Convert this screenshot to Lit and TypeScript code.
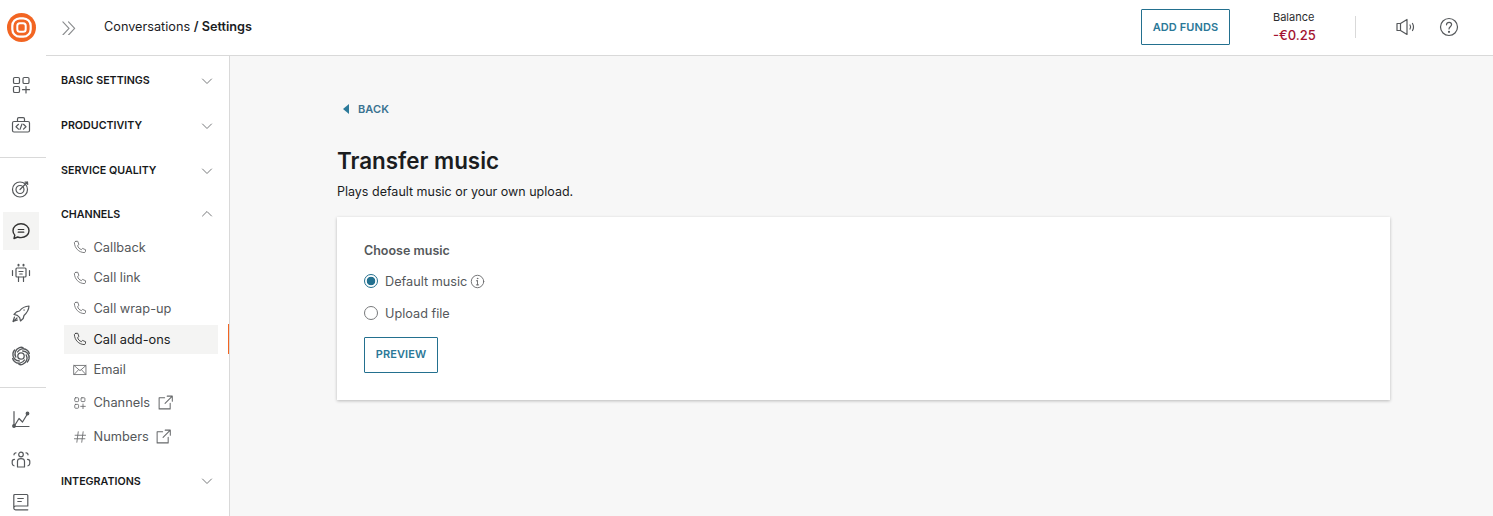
import { LitElement, html, css, svg } from "lit";
import { customElement } from "lit/decorators.js";

const ic = (body: unknown, size = 20, vb = 20, cls = "") =>
  html`<svg class="ic ${cls}" width=${size} height=${size} viewBox="0 0 ${vb} ${vb}" fill="none" stroke="currentColor" stroke-width="1.200" stroke-linecap="round" stroke-linejoin="round">${body}</svg>`;

const grid = svg`<rect x="2.500" y="2.500" width="5.500" height="5.500" rx="1.200"/><rect x="11.500" y="2.500" width="5.500" height="5.500" rx="1.200"/><rect x="2.500" y="12" width="5.500" height="5.500" rx="1.200"/><path d="M14.300 11.500v6.500M11 14.800h6.600"/>`;
const phone = svg`<path d="M4 2 6.800 1.800 8.500 6.500 6.500 8c.8 2.800 2.800 4.800 5.500 5.800l1.600-1.800 4.400 1.900-.3 2.800c-.2.800-1 1.400-1.800 1.300C8 17.500 2.500 11.500 2 4c0-1 .9-1.800 2-2z"/>`;
const ext = svg`<path d="M9 4.500H2.500V17.500H15.500V11M12 2.500H18V8.500M18 2.500 9.500 11"/>`;

const blades = [0, 60, 120, 180, 240, 300].map(
  (a) => svg`<path transform="rotate(${a} 10 10)" d="M6.500 6C8.500 2.800 13 1.500 16.500 4.500c1 .9 1.500 1.800 1.800 3" stroke-width="1.400"/>`
);

const rail = [
  svg`<rect x="2.500" y="2.500" width="6" height="6" rx="1.300"/><rect x="12" y="2.500" width="6" height="6" rx="1.300"/><rect x="2.500" y="11.500" width="6" height="6" rx="1.300"/><path d="M15 11.500v6.500M11.500 14.700h7"/>`,
  svg`<rect x="1.500" y="5.500" width="17" height="10.500" rx="1.500"/><path d="M6.500 5.500V3c0-.8.500-1.300 1.300-1.300h4.400c.8 0 1.300.5 1.300 1.300v2.500M7.500 8.300 5 10.700l2.500 2.400M12.500 8.300l2.500 2.400-2.500 2.400M11 8 9 13.400"/>`,
  svg`<circle cx="9" cy="10.500" r="7.500"/><circle cx="9" cy="10.500" r="4"/><path d="M9 10.500 16.500 3M14 3.200 16.500 3l.2 2.500"/>`,
  svg`<path d="M10 2.800c4.400 0 8 3 8 6.900s-3.600 6.900-8 6.900c-1.200 0-2.300-.2-3.300-.6L3 17.500l.8-3.400C2.700 12.900 2 11.400 2 9.700c0-3.900 3.600-6.900 8-6.900z" stroke-width="1.400"/><path d="M7.200 8.500h5.600M7.200 11.200h5.600"/>`,
  svg`<rect x="5" y="5" width="10" height="9" rx="1"/><path d="M1.500 7.500v5M18.500 7.500v5M7.500 14v4.500M12.500 14v4.500M8 8.500h4M8.800 11h2.400"/><path d="M7.500 1.800v.6M12.500 1.800v.6" stroke-width="2"/>`,
  svg`<path d="M18 2c-4 .2-7 1.800-9.500 5L5.500 7.800 3 10.500l3.300.8 2.400 2.400.8 3.300 2.700-2.500.8-3C15.700 9 17.800 6 18 2z"/><path d="M12.800 6h.6M6 14l-3.500 3.500M3.500 13 2 17.500 6.500 16"/>`,
  svg`<circle cx="10" cy="10" r="3.200" stroke-width="1.300"/>${blades}`,
  svg`<path d="M3 2.500V17.500H18"/><path d="M3 17.500 8 9.500l3.500 3.500L17 4"/><circle cx="16.500" cy="4.500" r="1.300" fill="currentColor"/><circle cx="3" cy="17" r="1.300" fill="currentColor"/>`,
  svg`<circle cx="10" cy="4.500" r="2.300"/><path d="M6.500 17v-5.500c0-1.500 1-2.800 3.500-2.800s3.500 1.300 3.500 2.800V17zM5 2.800a2 2 0 0 0-2 2M15 2.800a2 2 0 0 1 2 2M3 15.800c-1-.3-1.800-1-1.800-2.300v-2c0-1 .6-2.200 2.300-2.200M17 15.800c1-.3 1.800-1 1.800-2.300v-2c0-1-.6-2.200-2.300-2.200"/>`,
  svg`<path d="M2.800 16V3.500c0-.6.400-1 1-1h12c.6 0 1 .4 1 1V14H4.600c-1 0-1.800.9-1.800 2 0 1 .8 1.800 1.800 1.800h12.200M6.800 6.500h5.500M6.800 9.500h3.500"/>`,
];

@customElement("app-root")
export class AppRoot extends LitElement {
  static styles = css`
    :host { display: block; width: 1493px; height: 516px; overflow: hidden; font-family: Inter, "Liberation Sans", sans-serif; color: #1b1d1f; background: #fff; }
    * { box-sizing: border-box; }
    .ic { display: block; flex: none; }
    .app { display: flex; height: 516px; }

    .rail { width: 46px; flex: none; display: flex; flex-direction: column; align-items: stretch; color: #55585b; }
    .rail > * { flex: none; }
    .logo { height: 55px; display: flex; align-items: center; padding-left: 7px; }
    .ri { height: 41.500px; display: flex; align-items: center; justify-content: center; width: 36px; margin-left: 3px; }
    .ri.active { background: #f4f4f3; height: 38px; margin: 2.500px 0 2px 3px; color: #333; }
    .rule { height: 1px; background: #d9d9d9; }
    .g1 { padding-top: 9px; height: 102px; }
    .g2 { padding-top: 10px; height: 229px; }
    .g3 { padding-top: 10px; }

    .col { flex: 1; min-width: 0; display: flex; flex-direction: column; }
    .top { height: 56px; flex: none; border-bottom: 1px solid #d9d9d9; display: flex; align-items: center; }
    .tog { color: #8a8c8e; margin-left: 15px; margin-right: 27px; margin-top: -1px; }
    .crumb { font-size: 12.700px; color: #1b1d1f; margin-top: -2px; }
    .crumb b { font-weight: 600; }
    .spacer { flex: 1; }
    .btn { display: flex; align-items: center; justify-content: center; border: 1px solid #23708f; border-radius: 1px; color: #2b7897; font-size: 11px; font-weight: 600; letter-spacing: .1px; background: #fff; }
    .add { width: 89px; height: 36px; margin-top: -2px; }
    .bal { width: 43px; margin-left: 43px; margin-top: -2px; display: flex; flex-direction: column; white-space: nowrap; }
    .bal span { font-size: 11px; line-height: 16px; color: #2b2d2f; }
    .bal strong { font-size: 13px; line-height: 20px; font-weight: 500; color: #a3122f; }
    .vr { width: 1px; height: 22px; background: #d9d9d9; margin: -2px 0 0 39px; }
    .sp { color: #55585b; margin: -2px 0 0 40px; }
    .help { color: #55585b; margin: -2px 34px 0 23px; }

    .body { flex: 1; min-height: 0; display: flex; }
    .side { width: 184px; flex: none; border-right: 1px solid #d9d9d9; padding-top: 2px; position: relative; overflow: hidden; }
    .sec { height: 45px; display: flex; align-items: center; justify-content: space-between; padding: 0 16px 0 15px; font-size: 10.700px; font-weight: 600; color: #17191b; }
    .sec svg { color: #77797b; stroke-width: 1; }
    .sec.open { height: 42px; }
    .items { display: flex; flex-direction: column; padding-left: 18px; margin-top: -3px; }
    .it { display: flex; align-items: center; width: 154px; height: 30.500px; padding-left: 9px; gap: 6.500px; font-size: 12.800px; color: #55585b; }
    .it svg { color: #66686a; }
    .it.active { background: #f4f4f3; color: #1b1d1f; height: 29px; margin: 1px 0 1px; }
    .it.active svg { color: #333; }
    .it.tall { height: 35px; }
    .it.taller { height: 33.500px; }
    .mark { position: absolute; right: 0; top: 268px; width: 1px; height: 30px; background: #f26522; }
    .side .sec.last { margin-top: 5px; }

    .main { flex: 1; background: #f7f7f7; padding: 45px 103px 0 107px; }
    .back { display: flex; align-items: center; height: 16px; font-size: 11px; font-weight: 600; color: #3b7391; gap: 9px; padding-left: 6px; letter-spacing: .1px; }
    .tri { width: 0; height: 0; border-style: solid; border-width: 5.500px 6px 5.500px 0; border-color: transparent #2c7a9a transparent transparent; }
    h1 { margin: 29px 0 0; font-size: 22.400px; line-height: 30px; font-weight: 600; color: #1b1d1f; }
    .subt { margin: 7px 0 0; font-size: 12.500px; line-height: 18px; color: #1b1d1f; }
    .card { margin-top: 16px; height: 183px; background: #fff; box-shadow: 0 1px 3px rgba(0,0,0,.25); padding: 26px 27px; }
    .lab { font-size: 12.500px; font-weight: 600; line-height: 16px; color: #55585b; }
    .radio { display: flex; align-items: center; gap: 7px; height: 20px; font-size: 12.700px; color: #55585b; }
    .r1 { margin-top: 12px; }
    .r2 { margin-top: 12px; }
    .dot { width: 14px; height: 14px; border-radius: 50%; border: 1px solid #77797b; flex: none; }
    .dot.on { border-color: #23708f; background: radial-gradient(circle, #23708f 0 4px, #fff 4.600px); }
    .info { color: #66686a; margin-left: -4px; }
    .prev { width: 74px; height: 36px; margin-top: 14px; padding-bottom: 2px; }
  `;

  render() {
    const chevD = svg`<path d="M1.500 4 6 8.500 10.500 4"/>`;
    const chevU = svg`<path d="M1.500 8 6 3.500 10.500 8"/>`;
    const sec = (t: string, open = false, cls = "") =>
      html`<div class="sec ${open ? "open" : ""} ${cls}">${t}${ic(open ? chevU : chevD, 12, 12)}</div>`;
    const item = (t: string, icon: unknown, active = false) =>
      html`<div class="it ${active ? "active" : ""}">${ic(icon, 14, 20)}<span>${t}</span></div>`;
    const mail = svg`<rect x="1.500" y="3.500" width="17" height="13"/><path d="M1.500 3.500 10 11l8.500-7.500M1.500 16.500 8 9.500M18.500 16.500 12 9.500"/>`;
    const hash = svg`<path d="M7.500 2.500 5.500 17.500M14.500 2.500 12.500 17.500M3 7.500h15M2 12.500h15"/>`;
    return html`<div class="app">
      <nav class="rail">
        <div class="logo">
          <svg width="29" height="29" viewBox="0 0 29 29" fill="none">
            <circle cx="14.500" cy="14.500" r="14.500" fill="#f26522"/>
            <rect x="5.300" y="5.300" width="18.400" height="18.400" rx="7.500" stroke="#fff" stroke-width="2.200"/>
            <rect x="10.300" y="10.300" width="8.400" height="8.400" rx="2.500" stroke="#fff" stroke-width="2"/>
          </svg>
        </div>
        <div class="g1"><div class="ri">${ic(rail[0])}</div><div class="ri">${ic(rail[1])}</div></div>
        <div class="rule"></div>
        <div class="g2">
          <div class="ri">${ic(rail[2])}</div>
          <div class="ri active">${ic(rail[3])}</div>
          <div class="ri">${ic(rail[4])}</div>
          <div class="ri">${ic(rail[5])}</div>
          <div class="ri">${ic(rail[6])}</div>
        </div>
        <div class="rule"></div>
        <div class="g3">
          <div class="ri">${ic(rail[7])}</div>
          <div class="ri">${ic(rail[8])}</div>
          <div class="ri">${ic(rail[9])}</div>
        </div>
      </nav>
      <div class="col">
        <header class="top">
          <div class="tog">${ic(svg`<path d="M2 3l6.500 7L2 17M8 3l6.500 7L8 17"/>`, 16, 17)}</div>
          <div class="crumb">Conversations <b>/ Settings</b></div>
          <div class="spacer"></div>
          <div class="btn add">ADD FUNDS</div>
          <div class="bal"><span>Balance</span><strong>-€0.25</strong></div>
          <div class="vr"></div>
          <div class="sp">${ic(svg`<path d="M1 6.500h3.500L11 2.500v15l-6.500-4H1zM4.500 6.500v7M14 8c.8 1.200.8 2.800 0 4M16.500 6.500c1.300 2.200 1.300 4.800 0 7"/>`)}</div>
          <div class="help">${ic(svg`<circle cx="10" cy="10" r="8.500"/><path d="M7.500 7.800c0-1.500 1.100-2.500 2.600-2.500s2.500 1 2.500 2.300c0 2.200-2.600 2.200-2.600 4.400"/><circle cx="10" cy="14.800" r=".5" fill="currentColor"/>`)}</div>
        </header>
        <div class="body">
          <aside class="side">
            ${sec("BASIC SETTINGS")}
            ${sec("PRODUCTIVITY")}
            ${sec("SERVICE QUALITY")}
            ${sec("CHANNELS", true)}
            <div class="items">
              ${item("Callback", phone)}
              ${item("Call link", phone)}
              ${item("Call wrap-up", phone)}
              ${item("Call add-ons", phone, true)}
              ${item("Email", mail)}
              <div class="it tall">${ic(grid, 14, 20)}<span>Channels</span><span>${ic(ext, 17, 20)}</span></div>
              <div class="it taller">${ic(hash, 14, 20)}<span>Numbers</span><span>${ic(ext, 17, 20)}</span></div>
            </div>
            ${sec("INTEGRATIONS", false, "last")}
            <div class="mark"></div>
          </aside>
          <main class="main">
            <div class="back"><span class="tri"></span>BACK</div>
            <h1>Transfer music</h1>
            <p class="subt">Plays default music or your own upload.</p>
            <section class="card">
              <div class="lab">Choose music</div>
              <div class="radio r1"><span class="dot on"></span>Default music ${ic(svg`<circle cx="10" cy="10" r="8.300"/><path d="M10 9v5.500M8.500 9H10M8.500 14.500h3"/><circle cx="10" cy="6" r=".4" fill="currentColor"/>`, 15, 20, "info")}</div>
              <div class="radio r2"><span class="dot"></span>Upload file</div>
              <div class="btn prev">PREVIEW</div>
            </section>
          </main>
        </div>
      </div>
    </div>`;
  }
}
